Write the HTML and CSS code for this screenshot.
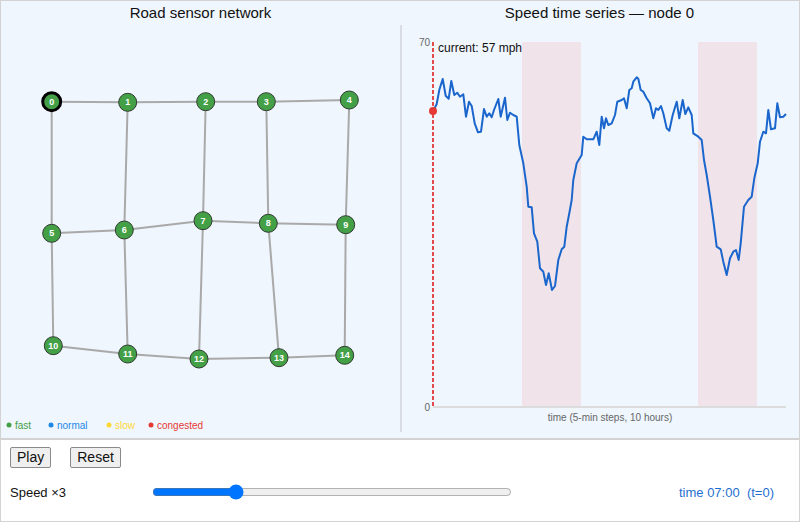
FILE: index.html
```html
<!DOCTYPE html>
<html lang="en">

<head>
    <meta charset="UTF-8">
    <meta name="viewport" content="width=device-width, initial-scale=1.0">
    <title>Road sensor network</title>
    <link rel="stylesheet" href="styles.css">
</head>

<body>
    <div class="app">
        <div class="panels">
            <div class="panel">
                <h2 class="title">Road sensor network</h2>
                <svg class="graph" viewBox="1 25 399 407" width="399" height="407">
                    <g class="edges">
                        <line x1="51.7" y1="101.7" x2="127.7" y2="102.3" />
                        <line x1="127.7" y1="102.3" x2="205.7" y2="101.7" />
                        <line x1="205.7" y1="101.7" x2="266.3" y2="101.7" />
                        <line x1="266.3" y1="101.7" x2="349.3" y2="100" />
                        <line x1="51.7" y1="233.3" x2="124.3" y2="230" />
                        <line x1="124.3" y1="230" x2="203" y2="220.7" />
                        <line x1="203" y1="220.7" x2="268.3" y2="223.3" />
                        <line x1="268.3" y1="223.3" x2="345.7" y2="224.7" />
                        <line x1="53.3" y1="345.7" x2="127.7" y2="354" />
                        <line x1="127.7" y1="354" x2="199" y2="359" />
                        <line x1="199" y1="359" x2="279" y2="357.7" />
                        <line x1="279" y1="357.7" x2="344.7" y2="355.3" />
                        <line x1="51.7" y1="101.7" x2="51.7" y2="233.3" />
                        <line x1="51.7" y1="233.3" x2="53.3" y2="345.7" />
                        <line x1="127.7" y1="102.3" x2="124.3" y2="230" />
                        <line x1="124.3" y1="230" x2="127.7" y2="354" />
                        <line x1="205.7" y1="101.7" x2="203" y2="220.7" />
                        <line x1="203" y1="220.7" x2="199" y2="359" />
                        <line x1="266.3" y1="101.7" x2="268.3" y2="223.3" />
                        <line x1="268.3" y1="223.3" x2="279" y2="357.7" />
                        <line x1="349.3" y1="100" x2="345.7" y2="224.7" />
                        <line x1="345.7" y1="224.7" x2="344.7" y2="355.3" />
                    </g>
                    <g class="nodes">
                        <circle class="selected" cx="51.7" cy="101.7" r="9" />
                        <circle cx="127.7" cy="102.3" r="9" />
                        <circle cx="205.7" cy="101.7" r="9" />
                        <circle cx="266.3" cy="101.7" r="9" />
                        <circle cx="349.3" cy="100" r="9" />
                        <circle cx="51.7" cy="233.3" r="9" />
                        <circle cx="124.3" cy="230" r="9" />
                        <circle cx="203" cy="220.7" r="9" />
                        <circle cx="268.3" cy="223.3" r="9" />
                        <circle cx="345.7" cy="224.7" r="9" />
                        <circle cx="53.3" cy="345.7" r="9" />
                        <circle cx="127.7" cy="354" r="9" />
                        <circle cx="199" cy="359" r="9" />
                        <circle cx="279" cy="357.7" r="9" />
                        <circle cx="344.7" cy="355.3" r="9" />
                    </g>
                    <g class="labels">
                        <text x="51.7" y="104.8">0</text>
                        <text x="127.7" y="105.4">1</text>
                        <text x="205.7" y="104.8">2</text>
                        <text x="266.3" y="104.8">3</text>
                        <text x="349.3" y="103.1">4</text>
                        <text x="51.7" y="236.4">5</text>
                        <text x="124.3" y="233.1">6</text>
                        <text x="203" y="223.8">7</text>
                        <text x="268.3" y="226.4">8</text>
                        <text x="345.7" y="227.8">9</text>
                        <text x="53.3" y="348.8">10</text>
                        <text x="127.7" y="357.1">11</text>
                        <text x="199" y="362.1">12</text>
                        <text x="279" y="360.8">13</text>
                        <text x="344.7" y="358.4">14</text>
                    </g>
                    <g class="legend">
                        <circle cx="9" cy="425" r="2.5" fill="#43a047" />
                        <text x="15" y="428.5" fill="#43a047">fast</text>
                        <circle cx="51" cy="425" r="2.5" fill="#1e88e5" />
                        <text x="57" y="428.5" fill="#1e88e5">normal</text>
                        <circle cx="109" cy="425" r="2.5" fill="#fdd835" />
                        <text x="115" y="428.5" fill="#fdd835">slow</text>
                        <circle cx="151" cy="425" r="2.5" fill="#e53935" />
                        <text x="157" y="428.5" fill="#e53935">congested</text>
                    </g>
                </svg>
            </div>
            <div class="panel">
                <h2 class="title">Speed time series — node 0</h2>
                <svg class="chart" viewBox="402 25 397 407" width="397" height="407">
                    <rect class="band" x="522" y="42" width="59" height="365" />
                    <rect class="band" x="698" y="42" width="59" height="365" />
                    <line class="axis" x1="433" y1="407" x2="786" y2="407" />
                    <text class="tick" x="430" y="45.5">70</text>
                    <text class="tick" x="430" y="410.5">0</text>
                    <text class="axis-label" x="610" y="421">time (5-min steps, 10 hours)</text>
                    <polyline class="series" points="433.3,111 436.7,104 439.3,90 442.7,79 445.7,95.7 448.7,98.7 451.3,81 454.3,95 457.3,92.7 460,96.7 463.3,94.3 466,116.7 469,101.7 471.7,106 474.7,123.3 478,132.3 481,131.7 484,109 486.7,116.7 489.3,113.3 491.7,117.3 494,110 498.3,99 500.7,116.7 505,97.7 507.3,120 510,112.7 513.3,115 516.7,116.7 519.3,145 523.3,163.3 526.7,186.7 528.3,206.7 531.7,207.3 534,233.3 537.3,241.7 540,268.3 543.3,271.7 546,285 548.7,273.3 552,290 555,286 558.3,260 561.7,249.3 564.3,246.7 566.7,226.7 569.3,213.3 571.7,200 573.3,180 576.7,163.3 581.7,155 583.3,136.7 586.7,139.3 593.3,139.3 596.7,131.7 599.3,145 601.7,116.7 604,128.3 606,118.3 608.3,125 611.7,123.3 615,115 617.3,101.7 621.7,100 624,98.3 626.7,108.3 629.3,90 631.7,88.3 633.3,81.7 636.7,77.3 638.3,78.7 640.7,90 643.3,91.7 646.7,98.3 650,103.3 653.3,118.3 656,108.3 658.3,110 661,106 663.3,113.3 666.7,128.3 669.3,130.7 672.7,115 676.7,101.7 679.3,118.3 682.7,100 685.3,114 688.3,107.3 691.7,115 693.3,133.3 698.3,136.7 701.7,140 704,160 706.7,175 710,196.7 713.3,220 716.7,246.7 720.7,249.3 723.3,261.7 726.7,275 730,258.3 733.3,251.7 736,250 738.7,260 740.7,243.3 744,206.7 748.3,200 751.7,196.7 754.3,178.3 757.7,163.3 760,141.7 763.3,131.7 766,133.3 768.3,110 771,129.3 775,128.3 777.3,103.3 780,117.3 783.3,116.7 786,114" />
                    <line class="cursor" x1="433" y1="42" x2="433" y2="407" />
                    <circle class="cursor-dot" cx="433" cy="111" r="4" />
                    <text class="current" x="438" y="52">current: 57 mph</text>
                </svg>
            </div>
        </div>
        <div class="controls">
            <div class="buttons">
                <button type="button">Play</button>
                <button type="button">Reset</button>
            </div>
            <div class="speed-row">
                <label for="speed" class="speed-label">Speed ×3</label>
                <input type="range" id="speed" min="1" max="10" value="3">
                <span class="clock">time 07:00  (t=0)</span>
            </div>
        </div>
    </div>
</body>

</html>
```

FILE: styles.css
```css
body {
    margin: 0;
    font-family: "Liberation Sans", Arial, sans-serif;
    color: #111;
}

.app {
    width: 800px;
    height: 522px;
    box-sizing: border-box;
    border: 1px solid #d3d3d3;
    background: #fff;
}

.panels {
    display: flex;
    height: 437px;
    background: #eff6fe;
    border-bottom: 2px solid #d3d3d3;
}

.panel {
    width: 399px;
    display: flex;
    flex-direction: column;
}

.title {
    margin: 0;
    height: 24px;
    line-height: 23px;
    font-size: 15px;
    font-weight: normal;
    text-align: center;
}

svg {
    display: block;
}

.chart {
    border-left: 2px solid #d9dde3;
}

.edges line {
    stroke: #a9a9a9;
    stroke-width: 2;
}

.nodes circle {
    fill: #43a047;
    stroke: #2f3a2f;
    stroke-width: 1;
}

.nodes .selected {
    stroke: #000;
    stroke-width: 3;
}

.labels text {
    fill: #fff;
    font-size: 9px;
    font-weight: bold;
    text-anchor: middle;
}

.legend text {
    font-size: 10px;
}

.band {
    fill: #f0e4ea;
}

.axis {
    stroke: #dcdcdc;
    stroke-width: 2;
}

.tick {
    fill: #666;
    font-size: 10px;
    text-anchor: end;
}

.axis-label {
    fill: #666;
    font-size: 10px;
    text-anchor: middle;
}

.series {
    fill: none;
    stroke: #1a66cc;
    stroke-width: 2;
    stroke-linejoin: round;
}

.cursor {
    stroke: #e34a4a;
    stroke-width: 2;
    stroke-dasharray: 4 2;
}

.cursor-dot {
    fill: #e53935;
}

.current {
    font-size: 12px;
    fill: #111;
}

.controls {
    padding: 7px 9px 0;
}

.buttons {
    display: flex;
    gap: 19px;
}

button {
    font-family: "Liberation Sans", Arial, sans-serif;
    font-size: 14px;
    line-height: 17px;
    padding: 1px 6px;
    background: #efefef;
    border: 1px solid #8a8a8a;
    border-radius: 2px;
    color: #111;
}

.speed-row {
    display: flex;
    align-items: center;
    height: 20px;
    margin-top: 14px;
    font-size: 13px;
}

.speed-label {
    width: 142px;
}

input[type="range"] {
    width: 360px;
    margin: 0;
}

.clock {
    margin-left: auto;
    margin-right: 16px;
    color: #1f6fd1;
    white-space: pre;
}
```
